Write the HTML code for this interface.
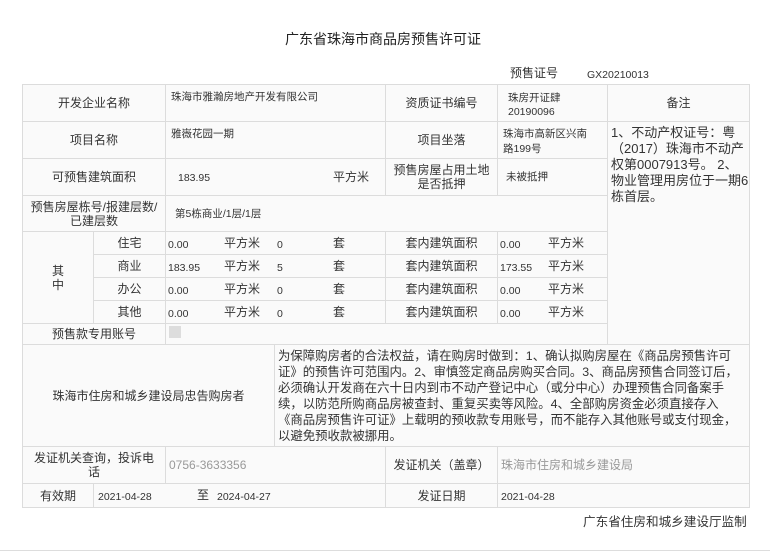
<!DOCTYPE html>
<html><head><meta charset="utf-8"><style>
body{margin:0;width:770px;height:553px;background:#fff;position:relative;overflow:hidden;font-family:"Liberation Sans","Noto Sans CJK SC",sans-serif;color:#333}
.c{position:absolute;border:1px solid #dcdcdc;box-sizing:border-box;background:#fafafa}
.t{position:absolute;white-space:nowrap;font-size:12px;line-height:14px}
.s{font-size:10.5px}
.ctr{display:flex;align-items:center;justify-content:center;text-align:center;font-size:12px;line-height:14px}
</style></head><body>
<div class="t" style="left:285px;top:31px;font-size:14px;line-height:16px;color:#222">广东省珠海市商品房预售许可证</div>
<div class="t" style="left:510px;top:66px">预售证号</div>
<div class="t s" style="left:587px;top:68px">GX20210013</div>

<div class="c ctr" style="left:22px;top:84px;width:144px;height:38px">开发企业名称</div>
<div class="c" style="left:165px;top:84px;width:221px;height:38px"></div>
<div class="t s" style="left:171px;top:90px">珠海市雅瀚房地产开发有限公司</div>
<div class="c ctr" style="left:385px;top:84px;width:113px;height:38px">资质证书编号</div>
<div class="c" style="left:497px;top:84px;width:111px;height:38px"></div>
<div class="t s" style="left:508px;top:91px;line-height:14px">珠房开证肆<br>20190096</div>
<div class="c ctr" style="left:607px;top:84px;width:143px;height:38px">备注</div>

<div class="c ctr" style="left:22px;top:121px;width:144px;height:38px">项目名称</div>
<div class="c" style="left:165px;top:121px;width:221px;height:38px"></div>
<div class="t s" style="left:171px;top:127px">雅嶶花园一期</div>
<div class="c ctr" style="left:385px;top:121px;width:113px;height:38px">项目坐落</div>
<div class="c" style="left:497px;top:121px;width:111px;height:38px"></div>
<div class="t s" style="left:503px;top:127px;line-height:15px">珠海市高新区兴南<br>路199号</div>
<div class="c" style="left:607px;top:121px;width:143px;height:224px"></div>
<div class="t" style="left:611px;top:125px;line-height:16px;font-size:13px">1、不动产权证号：粤<br>（2017）珠海市不动产<br>权第0007913号。 2、<br>物业管理用房位于一期6<br>栋首层。</div>

<div class="c ctr" style="left:22px;top:158px;width:144px;height:38px">可预售建筑面积</div>
<div class="c" style="left:165px;top:158px;width:221px;height:38px"></div>
<div class="t s" style="left:178px;top:171px">183.95</div>
<div class="t" style="left:333px;top:170px">平方米</div>
<div class="c ctr" style="left:385px;top:158px;width:113px;height:38px">预售房屋占用土地<br>是否抵押</div>
<div class="c" style="left:497px;top:158px;width:111px;height:38px"></div>
<div class="t s" style="left:506px;top:170px">未被抵押</div>

<div class="c ctr" style="left:22px;top:195px;width:144px;height:37px">预售房屋栋号/报建层数/<br>已建层数</div>
<div class="c" style="left:165px;top:195px;width:443px;height:37px"></div>
<div class="t s" style="left:175px;top:207px">第5栋商业/1层/1层</div>

<div class="c ctr" style="left:22px;top:231px;width:72px;height:93px">其<br>中</div>
<div class="c ctr" style="left:93px;top:231px;width:73px;height:24px">住宅</div>
<div class="c ctr" style="left:93px;top:254px;width:73px;height:24px">商业</div>
<div class="c ctr" style="left:93px;top:277px;width:73px;height:24px">办公</div>
<div class="c ctr" style="left:93px;top:300px;width:73px;height:24px">其他</div>
<div class="c" style="left:165px;top:231px;width:221px;height:24px"></div>
<div class="c" style="left:165px;top:254px;width:221px;height:24px"></div>
<div class="c" style="left:165px;top:277px;width:221px;height:24px"></div>
<div class="c" style="left:165px;top:300px;width:221px;height:24px"></div>
<div class="c ctr" style="left:385px;top:231px;width:113px;height:24px">套内建筑面积</div>
<div class="c ctr" style="left:385px;top:254px;width:113px;height:24px">套内建筑面积</div>
<div class="c ctr" style="left:385px;top:277px;width:113px;height:24px">套内建筑面积</div>
<div class="c ctr" style="left:385px;top:300px;width:113px;height:24px">套内建筑面积</div>
<div class="c" style="left:497px;top:231px;width:111px;height:24px"></div>
<div class="c" style="left:497px;top:254px;width:111px;height:24px"></div>
<div class="c" style="left:497px;top:277px;width:111px;height:24px"></div>
<div class="c" style="left:497px;top:300px;width:111px;height:24px"></div>

<div class="t s" style="left:168px;top:238px">0.00</div><div class="t" style="left:224px;top:236px">平方米</div><div class="t s" style="left:277px;top:238px">0</div><div class="t" style="left:333px;top:236px">套</div><div class="t s" style="left:500px;top:238px">0.00</div><div class="t" style="left:548px;top:236px">平方米</div>
<div class="t s" style="left:168px;top:261px">183.95</div><div class="t" style="left:224px;top:259px">平方米</div><div class="t s" style="left:277px;top:261px">5</div><div class="t" style="left:333px;top:259px">套</div><div class="t s" style="left:500px;top:261px">173.55</div><div class="t" style="left:548px;top:259px">平方米</div>
<div class="t s" style="left:168px;top:284px">0.00</div><div class="t" style="left:224px;top:282px">平方米</div><div class="t s" style="left:277px;top:284px">0</div><div class="t" style="left:333px;top:282px">套</div><div class="t s" style="left:500px;top:284px">0.00</div><div class="t" style="left:548px;top:282px">平方米</div>
<div class="t s" style="left:168px;top:307px">0.00</div><div class="t" style="left:224px;top:305px">平方米</div><div class="t s" style="left:277px;top:307px">0</div><div class="t" style="left:333px;top:305px">套</div><div class="t s" style="left:500px;top:307px">0.00</div><div class="t" style="left:548px;top:305px">平方米</div>

<div class="c ctr" style="left:22px;top:323px;width:144px;height:22px">预售款专用账号</div>
<div class="c" style="left:165px;top:323px;width:443px;height:22px"></div>
<div style="position:absolute;left:169px;top:326px;width:12px;height:12px;background:#ddd"></div>

<div class="c ctr" style="left:22px;top:344px;width:253px;height:103px">珠海市住房和城乡建设局忠告购房者</div>
<div class="c" style="left:274px;top:344px;width:476px;height:103px"></div>
<div class="t" style="left:278px;top:348px;line-height:16px;font-size:12.4px">为保障购房者的合法权益，请在购房时做到：1、确认拟购房屋在《商品房预售许可<br>证》的预售许可范围内。2、审慎签定商品房购买合同。3、商品房预售合同签订后，<br>必须确认开发商在六十日内到市不动产登记中心（或分中心）办理预售合同备案手<br>续，以防范所购商品房被查封、重复买卖等风险。4、全部购房资金必须直接存入<br>《商品房预售许可证》上载明的预收款专用账号，而不能存入其他账号或支付现金，<br>以避免预收款被挪用。</div>

<div class="c ctr" style="left:22px;top:446px;width:144px;height:38px">发证机关查询，投诉电<br>话</div>
<div class="c" style="left:165px;top:446px;width:221px;height:38px"></div>
<div class="t" style="left:169px;top:458px;color:#999">0756-3633356</div>
<div class="c ctr" style="left:385px;top:446px;width:113px;height:38px">发证机关（盖章）</div>
<div class="c" style="left:497px;top:446px;width:253px;height:38px"></div>
<div class="t" style="left:501px;top:458px;color:#999">珠海市住房和城乡建设局</div>

<div class="c ctr" style="left:22px;top:483px;width:72px;height:25px">有效期</div>
<div class="c" style="left:93px;top:483px;width:293px;height:25px"></div>
<div class="t s" style="left:98px;top:490px">2021-04-28</div>
<div class="t" style="left:197px;top:488px">至</div>
<div class="t s" style="left:217px;top:490px">2024-04-27</div>
<div class="c ctr" style="left:385px;top:483px;width:113px;height:25px">发证日期</div>
<div class="c" style="left:497px;top:483px;width:253px;height:25px"></div>
<div class="t s" style="left:501px;top:490px">2021-04-28</div>

<div class="t" style="left:583px;top:515px;font-size:12.6px">广东省住房和城乡建设厅监制</div>
<div style="position:absolute;left:0;top:550px;width:770px;height:1px;background:#ddd"></div>
</body></html>
